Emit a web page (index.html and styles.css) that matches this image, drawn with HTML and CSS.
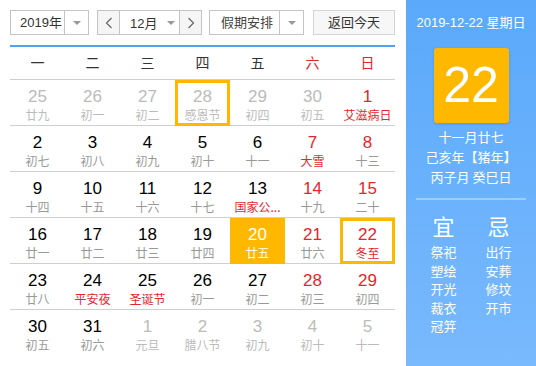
FILE: index.html
```html
<!DOCTYPE html>
<html lang="zh-CN">
<head>
    <meta charset="UTF-8">
    <title>万年历</title>
    <link rel="stylesheet" href="styles.css">
</head>
<body>
<div class="app">
    <div class="main">
        <div class="toolbar">
            <div class="select year">
                <span class="select-text">2019年</span>
                <span class="select-btn"><i class="caret"></i></span>
            </div>
            <div class="month-group">
                <div class="nav"><svg width="8" height="12" viewBox="0 0 8 12"><polyline points="6.5,1 1.5,6 6.5,11" fill="none" stroke="#666" stroke-width="1.2"/></svg></div>
                <div class="month-select"><span>12月</span><i class="caret"></i></div>
                <div class="nav"><svg width="8" height="12" viewBox="0 0 8 12"><polyline points="1.5,1 6.5,6 1.5,11" fill="none" stroke="#666" stroke-width="1.2"/></svg></div>
            </div>
            <div class="select holiday">
                <span class="select-text">假期安排</span>
                <span class="select-btn"><i class="caret"></i></span>
            </div>
            <div class="today-btn">返回今天</div>
        </div>

        <div class="weekdays">
            <span>一</span><span>二</span><span>三</span><span>四</span><span>五</span><span class="red">六</span><span class="red">日</span>
        </div>

        <div class="grid">
            <div class="row">
                <div class="cell other"><b>25</b><small>廿九</small></div>
                <div class="cell other"><b>26</b><small>初一</small></div>
                <div class="cell other"><b>27</b><small>初二</small></div>
                <div class="cell other marked"><b>28</b><small>感恩节</small></div>
                <div class="cell other"><b>29</b><small>初四</small></div>
                <div class="cell other"><b>30</b><small>初五</small></div>
                <div class="cell weekend"><b>1</b><small class="fest">艾滋病日</small></div>
            </div>
            <div class="row">
                <div class="cell"><b>2</b><small>初七</small></div>
                <div class="cell"><b>3</b><small>初八</small></div>
                <div class="cell"><b>4</b><small>初九</small></div>
                <div class="cell"><b>5</b><small>初十</small></div>
                <div class="cell"><b>6</b><small>十一</small></div>
                <div class="cell weekend"><b>7</b><small class="fest">大雪</small></div>
                <div class="cell weekend"><b>8</b><small>十三</small></div>
            </div>
            <div class="row">
                <div class="cell"><b>9</b><small>十四</small></div>
                <div class="cell"><b>10</b><small>十五</small></div>
                <div class="cell"><b>11</b><small>十六</small></div>
                <div class="cell"><b>12</b><small>十七</small></div>
                <div class="cell"><b>13</b><small class="fest">国家公...</small></div>
                <div class="cell weekend"><b>14</b><small>十九</small></div>
                <div class="cell weekend"><b>15</b><small>二十</small></div>
            </div>
            <div class="row">
                <div class="cell"><b>16</b><small>廿一</small></div>
                <div class="cell"><b>17</b><small>廿二</small></div>
                <div class="cell"><b>18</b><small>廿三</small></div>
                <div class="cell"><b>19</b><small>廿四</small></div>
                <div class="cell filled"><b>20</b><small>廿五</small></div>
                <div class="cell weekend"><b>21</b><small>廿六</small></div>
                <div class="cell weekend marked today"><b>22</b><small class="fest">冬至</small></div>
            </div>
            <div class="row">
                <div class="cell"><b>23</b><small>廿八</small></div>
                <div class="cell"><b>24</b><small class="fest">平安夜</small></div>
                <div class="cell"><b>25</b><small class="fest">圣诞节</small></div>
                <div class="cell"><b>26</b><small>初一</small></div>
                <div class="cell"><b>27</b><small>初二</small></div>
                <div class="cell weekend"><b>28</b><small>初三</small></div>
                <div class="cell weekend"><b>29</b><small>初四</small></div>
            </div>
            <div class="row last">
                <div class="cell"><b>30</b><small>初五</small></div>
                <div class="cell"><b>31</b><small>初六</small></div>
                <div class="cell other"><b>1</b><small>元旦</small></div>
                <div class="cell other"><b>2</b><small>腊八节</small></div>
                <div class="cell other"><b>3</b><small>初九</small></div>
                <div class="cell other"><b>4</b><small>初十</small></div>
                <div class="cell other"><b>5</b><small>十一</small></div>
            </div>
        </div>
    </div>

    <div class="side">
        <div class="side-date">2019-12-22 星期日</div>
        <div class="big-day">22</div>
        <div class="lunar">
            <div>十一月廿七</div>
            <div>己亥年【猪年】</div>
            <div>丙子月 癸巳日</div>
        </div>
        <div class="side-line"></div>
        <div class="yiji">
            <div class="yiji-col">
                <div class="yiji-title">宜</div>
                <div>祭祀</div>
                <div>塑绘</div>
                <div>开光</div>
                <div>裁衣</div>
                <div>冠笄</div>
            </div>
            <div class="yiji-col">
                <div class="yiji-title">忌</div>
                <div>出行</div>
                <div>安葬</div>
                <div>修坟</div>
                <div>开市</div>
            </div>
        </div>
    </div>
</div>
</body>
</html>
```

FILE: styles.css
```css
body {
    margin: 0;
    font-family: "Liberation Sans", "Noto Sans CJK SC", sans-serif;
    color: #333;
    background: #fff;
}
.app {
    display: flex;
    width: 536px;
    height: 366px;
}
.main {
    width: 385px;
    padding: 10px 11px 0 10px;
}
.toolbar {
    display: flex;
    height: 25px;
    font-size: 13px;
}
.select {
    display: flex;
    box-sizing: border-box;
    height: 25px;
    border: 1px solid #c4c4c4;
}
.select.year {
    width: 79px;
}
.select.holiday {
    width: 95px;
    margin-left: 7px;
}
.select-text {
    flex: 1;
    line-height: 23px;
    padding-left: 9px;
}
.select.holiday .select-text {
    padding-left: 11px;
    color: #444;
}
.select-btn {
    width: 23px;
    border-left: 1px solid #c4c4c4;
    display: flex;
    align-items: center;
    justify-content: center;
}
.caret {
    width: 0;
    height: 0;
    border-left: 4px solid transparent;
    border-right: 4px solid transparent;
    border-top: 4px solid #999;
}
.month-group {
    display: flex;
    box-sizing: border-box;
    width: 105px;
    height: 25px;
    margin-left: 8px;
    border: 1px solid #c4c4c4;
}
.nav {
    width: 21px;
    background: #f5f5f5;
    display: flex;
    align-items: center;
    justify-content: center;
}
.month-select {
    flex: 1;
    display: flex;
    align-items: center;
    border-left: 1px solid #c4c4c4;
    border-right: 1px solid #c4c4c4;
    padding-left: 10px;
}
.month-select .caret {
    margin-left: 10px;
}
.today-btn {
    box-sizing: border-box;
    width: 82px;
    height: 25px;
    margin-left: 9px;
    border: 1px solid #d4d4d4;
    background: #f7f7f7;
    line-height: 23px;
    text-align: center;
}
.weekdays {
    display: grid;
    grid-template-columns: repeat(7, 1fr);
    margin-top: 10px;
    border-top: 2px solid #4da3f5;
    border-bottom: 1px solid #cfcfcf;
    height: 32px;
    line-height: 31px;
    text-align: center;
    font-size: 14px;
    font-family: "Noto Sans CJK SC", sans-serif;
}
.red {
    color: #e4262d;
}
.row {
    display: grid;
    grid-template-columns: repeat(7, 1fr);
    height: 45px;
    border-bottom: 1px solid #cfcfcf;
}
.row.last {
    border-bottom: none;
}
.cell {
    box-sizing: border-box;
    padding-top: 6px;
    text-align: center;
}
.cell b {
    display: block;
    font-weight: normal;
    font-size: 17px;
    line-height: 22px;
    color: #000;
}
.cell small {
    display: block;
    font-size: 12px;
    line-height: 14px;
    color: #999;
    font-family: "Noto Sans CJK SC", sans-serif;
}
.cell.weekend b {
    color: #e4262d;
}
.cell small.fest {
    color: #e4262d;
}
.cell.other b {
    color: #bbb;
}
.cell.other small {
    color: #bbb;
}
.cell.marked {
    box-shadow: inset 0 0 0 3px #ffb800;
    height: 46px;
    padding-top: 6px;
}
.cell.filled {
    background: #ffb800;
}
.cell.filled b,
.cell.filled small {
    color: #fff;
}
.side {
    width: 130px;
    background: linear-gradient(#5aa9fb, #79b9fd);
    color: #fff;
    text-align: center;
    font-size: 13px;
}
.side-date {
    margin-top: 15px;
    line-height: 16px;
}
.big-day {
    width: 75px;
    height: 75px;
    margin: 17px auto 0;
    background: #ffb800;
    border-radius: 3px;
    box-shadow: 0 1px 3px rgba(0, 0, 0, 0.15);
    font-size: 50px;
    line-height: 75px;
}
.lunar {
    margin-top: 4px;
    line-height: 20px;
    font-family: "Noto Sans CJK SC", sans-serif;
}
.side-line {
    height: 2px;
    margin: 11px 10px 0;
    background: rgba(255, 255, 255, 0.35);
}
.yiji {
    display: flex;
    margin: 0 10px;
    font-family: "Noto Sans CJK SC", sans-serif;
}
.yiji-col {
    flex: 1;
    line-height: 18.5px;
}
.yiji-title {
    font-size: 22px;
    line-height: 26px;
    margin-top: 12px;
    margin-bottom: 5px;
}
```
